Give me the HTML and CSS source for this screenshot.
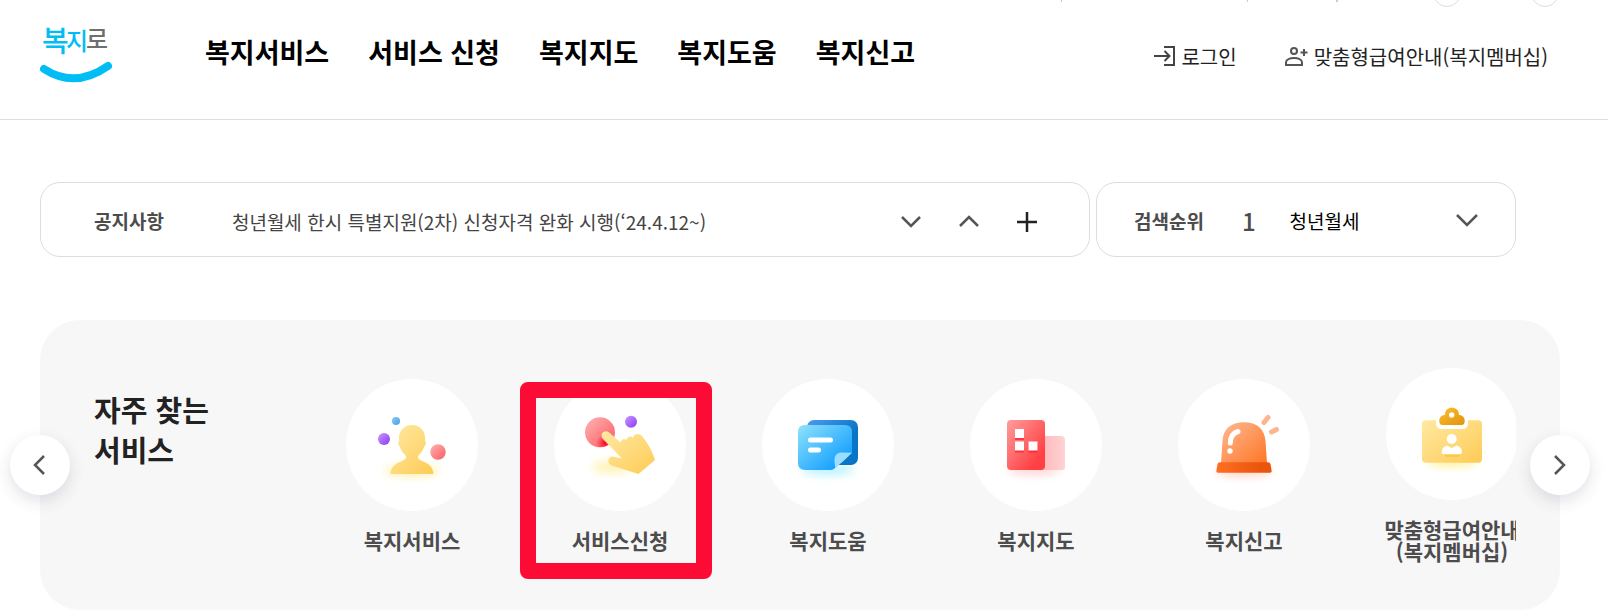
FILE: index.html
```html
<!DOCTYPE html>
<html lang="ko">
<head>
<meta charset="utf-8">
<meta name="viewport" content="width=device-width, initial-scale=1">
<title>복지로</title>
<link rel="stylesheet" href="styles.css">
</head>
<body>

<header class="header">
  <div class="topbar">
    <span class="divider"></span>
    <span class="divider"></span>
    <span class="divider thick"></span>
    <span class="round"></span>
    <span class="round"></span>
  </div>
  <div class="header-main">
    <a class="logo" href="#">
      <svg width="72" height="64" viewBox="0 0 72 64" role="img" aria-label="복지로">
        <text x="2" y="33" font-size="29" fill="#00bdf5">복</text>
        <text x="26" y="31" font-size="24" fill="#00bdf5">지</text>
        <text x="46" y="29" font-size="24" fill="#6f6f6f">로</text>
        <path d="M4 50Q35 70 68 47" fill="none" stroke="#00bdf5" stroke-width="8" stroke-linecap="round"/>
      </svg>
    </a>
    <nav class="nav">
      <a href="#">복지서비스</a>
      <a href="#">서비스 신청</a>
      <a href="#">복지지도</a>
      <a href="#">복지도움</a>
      <a href="#">복지신고</a>
    </nav>
    <div class="util">
      <a href="#">
        <svg width="22" height="22" viewBox="0 0 22 22" fill="none" stroke="#444" stroke-width="2">
          <path d="M11 2H21V20H11M1 11H16M11.500 6L16.500 11L11.500 16"/>
        </svg>
        로그인
      </a>
      <a href="#">
        <svg width="23" height="22" viewBox="0 0 23 22" fill="none" stroke="#555" stroke-width="2">
          <circle cx="9" cy="6" r="3"/>
          <path d="M1 20V17.500C1 11.500 17 11.500 17 17.500V20ZM19 4V11M15.500 7.500H22.500"/>
        </svg>
        맞춤형급여안내(복지멤버십)
      </a>
    </div>
  </div>
</header>

<main>
  <div class="boards">
    <section class="board notice">
      <h2>공지사항</h2>
      <a class="notice-text" href="#">청년월세 한시 특별지원(2차) 신청자격 완화 시행(‘24.4.12~)</a>
      <div class="board-buttons">
        <button type="button" aria-label="다음 공지">
          <svg width="20" height="20" viewBox="0 0 20 20"><path d="M1 5L10 14L19 5"/></svg>
        </button>
        <button type="button" aria-label="이전 공지">
          <svg width="20" height="20" viewBox="0 0 20 20"><path d="M1 14L10 5L19 14"/></svg>
        </button>
        <button type="button" class="plus" aria-label="더보기">
          <svg width="20" height="20" viewBox="0 0 20 20"><path d="M10 0V20M0 10H20"/></svg>
        </button>
      </div>
    </section>
    <section class="board rank">
      <h2>검색순위</h2>
      <strong class="rank-number">1</strong>
      <a class="rank-text" href="#">청년월세</a>
      <button type="button" aria-label="순위 펼치기">
        <svg width="22" height="20" viewBox="0 0 22 20"><path d="M1 4L11 14L21 4"/></svg>
      </button>
    </section>
  </div>

  <section class="quick">
    <h2 class="quick-title">자주 찾는<br>서비스</h2>
    <div class="slider">
      <a class="item" href="#">
        <svg class="icon" viewBox="0 0 132 132">
          <defs>
            <linearGradient id="yellow" x1="0" y1="0" x2="1" y2="1"><stop offset="0" stop-color="#ffe9a3"/><stop offset="1" stop-color="#fecb55"/></linearGradient>
            <linearGradient id="purple" x1="0" y1="0" x2="1" y2="1"><stop offset="0" stop-color="#c79aff"/><stop offset="1" stop-color="#8a38f5"/></linearGradient>
            <linearGradient id="pink" x1="0" y1="0" x2="1" y2="1"><stop offset="0" stop-color="#fdb4b4"/><stop offset="1" stop-color="#fc5a5f"/></linearGradient>
            <linearGradient id="sky" x1="0" y1="0" x2="1" y2="1"><stop offset="0" stop-color="#8cc9f2"/><stop offset="1" stop-color="#469fe4"/></linearGradient>
            <filter id="glow" x="-50%" y="-100%" width="200%" height="300%"><feGaussianBlur stdDeviation="4"/></filter>
          </defs>
          <ellipse cx="66" cy="92" rx="28" ry="6" fill="#fff3b5" filter="url(#glow)"/>
          <path d="M66 46C74 46 79 52 79 59V62C80.500 63 80 66 78 68C77 72 74 75 72 77V79C74 83 87 83 87.500 95H44.500C45 83 58 83 60 79V77C58 75 55 72 54 68C52 66 51.500 63 53 62V59C53 52 58 46 66 46Z" fill="url(#yellow)"/>
          <circle cx="50" cy="42" r="4" fill="url(#sky)"/>
          <circle cx="38" cy="60" r="6" fill="url(#purple)"/>
          <circle cx="92" cy="73" r="7.700" fill="url(#pink)"/>
        </svg>
        <span>복지서비스</span>
      </a>
      <a class="item selected" href="#">
        <svg class="icon" viewBox="0 0 132 132">
          <defs>
            <radialGradient id="press"><stop offset="0" stop-color="#ff0020"/><stop offset="1" stop-color="#ff2040" stop-opacity="0"/></radialGradient>
            <clipPath id="ball"><circle cx="46" cy="53.300" r="15"/></clipPath>
          </defs>
          <ellipse cx="58" cy="88" rx="20" ry="6" fill="#fff3b5" filter="url(#glow)"/>
          <circle cx="46" cy="53.300" r="15" fill="url(#pink)"/>
          <circle cx="51" cy="64" r="9" fill="url(#press)" clip-path="url(#ball)"/>
          <circle cx="77" cy="42.700" r="6" fill="url(#purple)"/>
          <path d="M54.500 53L66.500 63.500C67 60 70.500 59 72.500 61C73 57.500 77 56.500 79 59C79.500 54.500 85 53.500 88 57C94 64 98 72 101 81L84.500 95L57.500 86.500C52.500 84.500 54 77.500 58.500 77.500L68 79.500L48.500 59.500C45.500 54.500 50.500 50.500 54.500 53Z" fill="url(#yellow)"/>
        </svg>
        <span>서비스신청</span>
      </a>
      <a class="item" href="#">
        <svg class="icon" viewBox="0 0 132 132">
          <defs>
            <linearGradient id="blueBack" x1="0" y1="0" x2="1" y2="1"><stop offset="0" stop-color="#4d9bf3"/><stop offset=".6" stop-color="#0a74c6"/></linearGradient>
            <linearGradient id="blueFront" x1="0" y1="0" x2="1" y2="1"><stop offset="0" stop-color="#8fe3fb"/><stop offset=".8" stop-color="#1ba3ff"/></linearGradient>
          </defs>
          <ellipse cx="66" cy="91" rx="26" ry="5" fill="#b5f1ff" filter="url(#glow)"/>
          <rect x="45" y="41" width="51" height="45" rx="7" fill="url(#blueBack)"/>
          <path d="M43 46H83Q90 46 90 53V74L73 89Q71 91 69 91H43Q36 91 36 84V53Q36 46 43 46Z" fill="url(#blueFront)"/>
          <path d="M90 73.700C84 80 79 84 73 89C73.500 86 72 84 72.500 80Q73 74 79 73.500Z" fill="#9addff"/>
          <path d="M48.500 61H68.500M48.500 71H56.500" stroke="#fff" stroke-width="5" stroke-linecap="round"/>
        </svg>
        <span>복지도움</span>
      </a>
      <a class="item" href="#">
        <svg class="icon" viewBox="0 0 132 132">
          <defs>
            <linearGradient id="red" x1="0" y1="0" x2="1" y2="1"><stop offset="0" stop-color="#ff9d9d"/><stop offset=".8" stop-color="#ff4144"/></linearGradient>
            <linearGradient id="redSide"><stop offset="0" stop-color="#ffb9bc"/><stop offset="1" stop-color="#ffd3d4"/></linearGradient>
          </defs>
          <ellipse cx="64" cy="91" rx="26" ry="5" fill="#ffd3d3" filter="url(#glow)"/>
          <path d="M75 57H91Q95 57 95 61V88Q95 91 92 91H72V57Z" fill="url(#redSide)"/>
          <rect x="37" y="41" width="38" height="50" rx="4" fill="url(#red)"/>
          <path d="M45 52H54V61H45ZM45 64.500H54V73.500H45ZM58.500 64.500H67.500V73.500H58.500Z" fill="#fb1f2c" opacity=".7"/>
          <path d="M45 50H54V59H45ZM45 62.500H54V71.500H45ZM58.500 62.500H67.500V71.500H58.500Z" fill="#fff"/>
        </svg>
        <span>복지지도</span>
      </a>
      <a class="item" href="#">
        <svg class="icon" viewBox="0 0 132 132">
          <defs>
            <linearGradient id="orange" x1="0" y1="0" x2="1" y2="1"><stop offset="0" stop-color="#ffba92"/><stop offset="1" stop-color="#fd7526"/></linearGradient>
            <linearGradient id="orangeBase"><stop offset="0" stop-color="#ff6f22"/><stop offset=".8" stop-color="#e9550b"/></linearGradient>
          </defs>
          <ellipse cx="66" cy="93" rx="28" ry="4" fill="#ffcdbd" filter="url(#glow)"/>
          <path d="M43 84L44.500 62C45 50 53 43.300 66 43.300C79 43.300 86.500 50 87.500 62L89 84Z" fill="url(#orange)"/>
          <path d="M42 83.300H90Q92 83.300 92.500 85L93.700 92Q93.700 93.700 92 93.700H40Q38.300 93.700 38.300 92L39.500 85Q40 83.300 42 83.300Z" fill="url(#orangeBase)"/>
          <path d="M60 52.500Q52.300 55 52.300 64" fill="none" stroke="#fff" stroke-width="5" stroke-linecap="round"/>
          <circle cx="52" cy="72" r="2.700" fill="#fff"/>
          <path d="M90 38.500L86 43.500M98.500 50.500L93.500 53" stroke="#ffb48e" stroke-width="5" stroke-linecap="round"/>
        </svg>
        <span>복지신고</span>
      </a>
      <a class="item" href="#">
        <svg class="icon" viewBox="0 0 132 132">
          <defs>
            <linearGradient id="gold" x1="0" y1="0" x2="1" y2="1"><stop offset="0" stop-color="#fbc02d"/><stop offset="1" stop-color="#e2920f"/></linearGradient>
          </defs>
          <ellipse cx="66" cy="94" rx="26" ry="4" fill="#fff08f" filter="url(#glow)"/>
          <path d="M40 52.300H50V55Q50 61 56 61H76Q82 61 82 55V52.300H92Q96 52.300 96 56V91Q96 94.700 92 94.700H40Q36 94.700 36 91V56Q36 52.300 40 52.300Z" fill="url(#yellow)"/>
          <path fill-rule="evenodd" d="M56.500 57Q53.300 57 53.300 53C53.300 49 56 47 59 47C59 42 62 39.700 65.800 39.700C70 39.700 73 42 73 47C76 47 78.700 49 78.700 53Q78.700 57 75.500 57ZM65.700 44.300A2.700 2.700 0 1 0 65.700 49.700A2.700 2.700 0 1 0 65.700 44.300Z" fill="url(#gold)"/>
          <path d="M57 85H75L72 89H60Z" fill="#fbbf2d" opacity=".6"/>
          <circle cx="65.700" cy="71" r="5" fill="#fff"/>
          <path d="M61 77.500L65.700 80L70.500 77.500Q76 79 76 84Q76 86.300 74 86.300H57.700Q55.700 86.300 55.700 84Q55.700 79 61 77.500Z" fill="#fff"/>
        </svg>
        <span>맞춤형급여안내<br>(복지멤버십)</span>
      </a>
    </div>
    <button type="button" class="arrow prev" aria-label="이전">
      <svg width="22" height="22" viewBox="0 0 22 22"><path d="M15 2L6 11L15 20"/></svg>
    </button>
    <button type="button" class="arrow next" aria-label="다음">
      <svg width="22" height="22" viewBox="0 0 22 22"><path d="M6 2L15 11L6 20"/></svg>
    </button>
  </section>
</main>

</body>
</html>
```
FILE: styles.css
```css
* {
  box-sizing: border-box;
}

body {
  margin: 0;
  font-family: "Noto Sans CJK KR", "Noto Sans", sans-serif;
  color: #222;
  background-color: #fff;
}

h2 {
  margin: 0;
}

a {
  color: inherit;
  text-decoration: none;
}

button {
  padding: 0;
  border: 0;
  background: none;
  cursor: pointer;
}

button svg {
  display: block;
  fill: none;
  stroke: #555;
  stroke-width: 2.5;
}

.header {
  border-bottom: 1px solid #ddd;
}

.topbar {
  display: flex;
  justify-content: flex-end;
  height: 8px;
  padding-right: 49px;
  overflow: hidden;
}

.divider {
  width: 1px;
  height: 2px;
  margin-right: 185px;
  background-color: #ccc;
}

.divider + .divider {
  margin-right: 88px;
}

.divider.thick {
  width: 2px;
  margin-right: 95px;
}

.round {
  width: 28px;
  height: 28px;
  margin-top: -21px;
  border: 1px solid #ddd;
  border-radius: 50%;
}

.round + .round {
  margin-left: 70px;
}

.header-main {
  display: flex;
  align-items: center;
  height: 86px;
  margin-bottom: 25px;
  padding: 0 60px 0 40px;
}

.logo svg {
  display: block;
  font-weight: 500;
}

.nav {
  display: flex;
  gap: 39px;
  margin-left: 93px;
  font-size: 27px;
  font-weight: 700;
  color: #000;
  white-space: nowrap;
}

.util {
  display: flex;
  gap: 48px;
  margin-left: auto;
  padding-top: 10px;
  font-size: 20px;
  white-space: nowrap;
}

.util a {
  display: flex;
  align-items: center;
  gap: 6px;
}

.boards {
  display: grid;
  grid-template-columns: 5fr 2fr;
  gap: 6px;
  margin: 62px 92px 0 40px;
}

.board {
  display: flex;
  align-items: center;
  height: 75px;
  border: 1px solid #ddd;
  border-radius: 20px;
  font-size: 19px;
  white-space: nowrap;
}

.board h2 {
  font-size: 19px;
  font-weight: 700;
  color: #4c4c4c;
}

.notice {
  padding: 2px 52px 0 53px;
}

.notice-text {
  margin-left: 68px;
  padding-top: 2px;
  color: #444;
}

.board-buttons {
  display: flex;
  gap: 38px;
  margin-left: auto;
  padding-top: 2px;
}

.plus svg {
  stroke: #222;
}

.rank {
  padding: 2px 37px 0;
}

.rank-number {
  margin: 0 34px 0 38px;
  font-size: 24px;
  font-weight: 500;
  color: #4c4c4c;
}

.rank-text {
  color: #000;
}

.rank button {
  margin-left: auto;
}

.quick {
  display: flex;
  position: relative;
  margin: 63px 48px 0 40px;
  border-radius: 40px;
  background-color: #f7f7f7;
}

.quick-title {
  flex: none;
  width: 268px;
  padding: 69px 0 0 54px;
  font-size: 29px;
  line-height: 40px;
}

.slider {
  display: flex;
  flex: 1;
  align-items: center;
  margin-right: 44px;
  padding: 48px 0;
  overflow: hidden;
}

.item {
  position: relative;
  flex: none;
  width: 208px;
  text-align: center;
  font-size: 21px;
  font-weight: 700;
  line-height: 22px;
  color: #4c4c4c;
}

.icon {
  display: block;
  width: 132px;
  height: 132px;
  margin: 0 auto 18px;
  border-radius: 50%;
  background-color: #fff;
}

.selected::after {
  content: "";
  position: absolute;
  top: 3px;
  left: 4px;
  box-sizing: border-box;
  width: 192px;
  height: 197px;
  border: 16px solid #fc0b34;
  border-radius: 8px;
}

.arrow {
  display: flex;
  position: absolute;
  top: calc(50% - 30px);
  align-items: center;
  justify-content: center;
  width: 60px;
  height: 60px;
  border-radius: 50%;
  background-color: #fff;
  box-shadow: 0 6px 16px rgba(50, 50, 90, .14);
}

.prev {
  left: -30px;
}

.next {
  right: -30px;
}
```
